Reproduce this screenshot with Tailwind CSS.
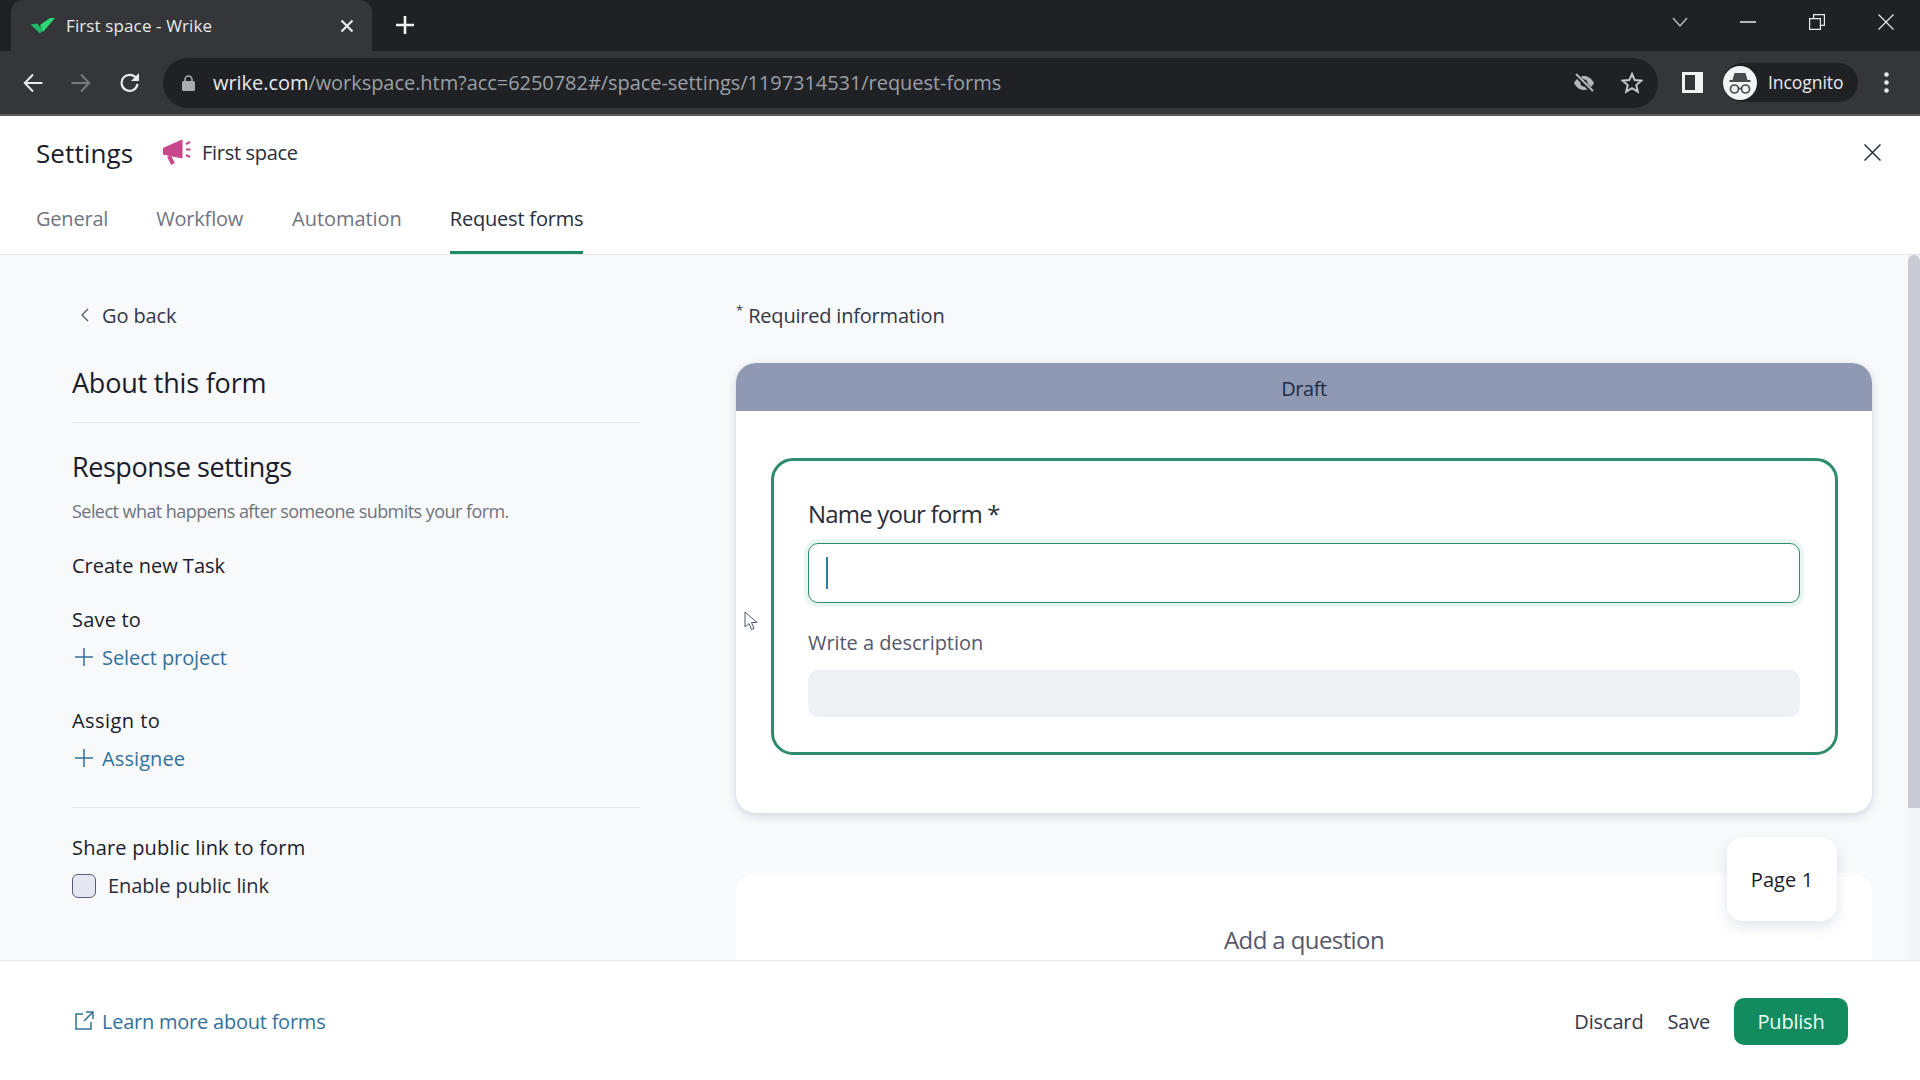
<!DOCTYPE html>
<html lang="en">
<head>
    <meta charset="UTF-8">
    <title>First space - Wrike</title>
    <script src="https://cdn.jsdelivr.net/npm/@tailwindcss/browser@4"></script>
</head>
<body class="bg-white font-['Open_Sans','Noto_Sans',sans-serif] overflow-hidden">
<div class="relative flex flex-col w-[1920px] h-[1080px] overflow-hidden">

    <!-- tab strip -->
    <div class="flex h-[51px] shrink-0 bg-[#202124]">
        <div class="flex items-center ml-[11px] w-[361px] h-[51px] bg-[#35363a] rounded-t-[12px] pl-[19px] pr-[18px]">
            <svg class="w-[25px] h-[16px] shrink-0" viewBox="0 0 25 16"><path d="M.5 6.500L7 5.500 13 12l-3 3.500z" fill="#1fb866"/><path d="M10 7L20 0h5L13 14z" fill="#2bd873"/></svg>
            <span class="ml-[11px] text-[17px] tracking-[0.12px] text-[#e8eaed]">First space - Wrike</span>
            <svg class="ml-auto w-[14px] h-[14px]" viewBox="0 0 14 14"><path d="M1.500 1.500l11 11M12.500 1.500l-11 11" stroke="#e8eaed" stroke-width="2.200"/></svg>
        </div>
        <svg class="ml-[24px] mt-[16px] w-[18px] h-[18px]" viewBox="0 0 18 18"><path d="M9 0v18M0 9h18" stroke="#f1f3f4" stroke-width="2.600"/></svg>
        <div class="ml-auto flex items-center h-[44px] pr-[26px]">
            <svg class="w-[16px] h-[10px]" viewBox="0 0 16 10"><path d="M1 1l7 8 7-8" fill="none" stroke="#bdc1c6" stroke-width="1.200"/></svg>
            <svg class="ml-[52px] w-[16px] h-[2px]" viewBox="0 0 16 2"><path d="M0 1h16" stroke="#e8eaed" stroke-width="1.500"/></svg>
            <svg class="ml-[53px] w-[16px] h-[16px]" viewBox="0 0 16 16"><path d="M.6 4.600h10.800v10.800H.6zM4.600 4V.6h10.800v10.800H12" fill="none" stroke="#e8eaed" stroke-width="1.200"/></svg>
            <svg class="ml-[53px] w-[16px] h-[16px]" viewBox="0 0 16 16"><path d="M.5.5l15 15M15.500.5l-15 15" stroke="#e8eaed" stroke-width="1.200"/></svg>
        </div>
    </div>

    <!-- toolbar -->
    <div class="flex items-center h-[65px] shrink-0 bg-[#35363a] border-b-2 border-[#5a5b5e]">
        <svg class="ml-[23px] w-[20px] h-[20px]" viewBox="0 0 20 20"><path d="M19.500 10H2M10 1.500L1.800 10l8.200 8.500" fill="none" stroke="#e8eaed" stroke-width="2"/></svg>
        <svg class="ml-[28px] w-[20px] h-[20px]" viewBox="0 0 20 20"><path d="M.5 10H18M10 1.500l8.200 8.500-8.200 8.500" fill="none" stroke="#77797c" stroke-width="2"/></svg>
        <svg class="ml-[28px] w-[21px] h-[21px]" viewBox="0 0 21 21"><path d="M17.600 7A8 8 0 1 0 18.500 12" fill="none" stroke="#e8eaed" stroke-width="2.200"/><path d="M20 1v8h-8z" fill="#e8eaed"/></svg>
        <div class="ml-[23px] flex items-center w-[1495px] h-[50px] rounded-full bg-[#202124]">
            <svg class="ml-[19px] w-[13px] h-[16px]" viewBox="0 0 13 16"><path d="M3 7V4.500a3.500 3.500 0 0 1 7 0V7" fill="none" stroke="#a9abae" stroke-width="1.600"/><rect y="6" width="13" height="10" rx="1.500" fill="#a9abae"/></svg>
            <span class="ml-[18px] text-[20px] tracking-[-0.05px] text-[#e8eaed]">wrike.com<span class="text-[#9aa0a6]">/workspace.htm?acc=6250782#/space-settings/1197314531/request-forms</span></span>
            <svg class="ml-auto w-[22px] h-[22px]" viewBox="0 0 22 22"><path d="M1 11c3-5 6-7 10-7s7 2 10 7c-3 5-6 7-10 7s-7-2-10-7z" fill="#b4b6b9"/><circle cx="11" cy="11" r="3.500" fill="#202124"/><path d="M2.500 2.500l17 17" stroke="#202124" stroke-width="4.500"/><path d="M3 2l17 17" stroke="#b4b6b9" stroke-width="2"/></svg>
            <svg class="ml-[26px] mr-[15px] w-[22px] h-[22px]" viewBox="0 0 22 22"><path d="M11 2l2.700 6.100 6.600.6-5 4.400 1.500 6.500L11 16.200l-5.800 3.400 1.500-6.500-5-4.400 6.600-.6z" fill="none" stroke="#c4c6c9" stroke-width="2"/></svg>
        </div>
        <svg class="ml-[24px] w-[21px] h-[21px]" viewBox="0 0 21 21"><path d="M0 0h21v21H0z" fill="#f1f3f4"/><path d="M3 3h10v15H3z" fill="#35363a"/></svg>
        <div class="ml-[20px] flex items-center w-[135px] h-[39px] rounded-full bg-[#202124]">
            <svg class="w-[34px] h-[34px] shrink-0" viewBox="0 0 34 34"><circle cx="17" cy="17" r="17" fill="#f1f3f4"/><path d="M11.500 7h11l2 7h-15z" fill="#4a4b4e"/><path d="M6.500 15h21" stroke="#4a4b4e" stroke-width="2"/><circle cx="11.500" cy="23" r="4" fill="none" stroke="#4a4b4e" stroke-width="1.700"/><circle cx="22.500" cy="23" r="4" fill="none" stroke="#4a4b4e" stroke-width="1.700"/><path d="M15.500 22.500h3" stroke="#4a4b4e" stroke-width="1.700"/></svg>
            <span class="ml-[11px] text-[17.5px] tracking-[-0.05px] text-[#e8eaed]">Incognito</span>
        </div>
        <svg class="ml-[26px] w-[5px] h-[21px]" viewBox="0 0 5 21"><circle cx="2.500" cy="2.500" r="2.300" fill="#e8eaed"/><circle cx="2.500" cy="10.500" r="2.300" fill="#e8eaed"/><circle cx="2.500" cy="18.500" r="2.300" fill="#e8eaed"/></svg>
    </div>

    <!-- settings header -->
    <div class="flex flex-col h-[139px] shrink-0 border-b border-[#e4e6ea] px-[36px]">
        <div class="flex items-center h-[74px]">
            <span class="w-[99px] text-[26px] font-medium text-[#1a1c2b] tracking-[0.1px]">Settings</span>
            <svg class="ml-[28px] w-[28px] h-[28px]" viewBox="0 0 28 28"><path d="M0 9.500L19 1v18L0 15z" fill="#c9468a" stroke="#c9468a" stroke-width="1" stroke-linejoin="round"/><path d="M6 17l4 8" stroke="#c9468a" stroke-width="4"/><path d="M23 5l4-2M23 10.500h4.500M23 16l4 2" stroke="#c9468a" stroke-width="2"/></svg>
            <span class="ml-[11px] text-[20px] text-[#2a2d3a] tracking-[-0.3px]">First space</span>
            <svg class="ml-auto mr-[3px] mb-[2px] w-[17px] h-[17px]" viewBox="0 0 17 17"><path d="M.5.5l16 16M16.500.5l-16 16" stroke="#2a2d3a" stroke-width="1.500"/></svg>
        </div>
        <div class="flex gap-[48px] mt-auto text-[20px] tracking-[-0.2px] text-[#6f7480]">
            <span class="h-[60px] pt-[10px]">General</span>
            <span class="h-[60px] pt-[10px]">Workflow</span>
            <span class="h-[60px] pt-[10px] ml-[1px] tracking-[-0.05px]">Automation</span>
            <span class="h-[60px] pt-[10px] text-[#2a2d3a] border-b-[3px] border-[#1f8a66]">Request forms</span>
        </div>
    </div>

    <!-- body -->
    <div class="relative flex flex-1 min-h-0 bg-[#f8f9fb]">
        <!-- left panel -->
        <div class="w-[568px] ml-[72px] shrink-0">
            <div class="flex items-center h-[34px] mt-[44px]">
                <svg class="ml-[8px] mb-[2px] w-[10px] h-[14px]" viewBox="0 0 10 14"><path d="M8 1L2 7l6 6" fill="none" stroke="#55586a" stroke-width="1.300"/></svg>
                <span class="ml-[12px] text-[20px] tracking-[-0.1px] text-[#33374a]">Go back</span>
            </div>
            <div class="mt-[28px] h-[44px] flex items-center text-[27px] font-medium tracking-[-0.2px] text-[#1a1c2b]">About this form</div>
            <div class="mt-[17px] border-t border-[#e4e6ea]"></div>
            <div class="mt-[22px] h-[44px] flex items-center text-[27px] font-medium tracking-[-0.45px] text-[#1a1c2b]">Response settings</div>
            <div class="mt-[10px] h-[24px] flex items-center text-[18px] tracking-[-0.55px] text-[#6f7480]">Select what happens after someone submits your form.</div>
            <div class="mt-[28px] h-[30px] flex items-center text-[20px] font-medium text-[#1a1c2b]">Create new Task</div>
            <div class="mt-[24px] h-[30px] flex items-center text-[20px] font-medium tracking-[0.2px] text-[#1a1c2b]">Save to</div>
            <div class="mt-[8px] h-[30px] flex items-center">
                <svg class="ml-[3px] mb-[2px] w-[18px] h-[18px]" viewBox="0 0 18 18"><path d="M9 0v18M0 9h18" stroke="#33719b" stroke-width="1.500"/></svg>
                <span class="ml-[9px] text-[20px] tracking-[-0.07px] text-[#33719b]">Select project</span>
            </div>
            <div class="mt-[33px] h-[30px] flex items-center text-[20px] font-medium tracking-[0.45px] text-[#1a1c2b]">Assign to</div>
            <div class="mt-[8px] h-[30px] flex items-center">
                <svg class="ml-[3px] mb-[2px] w-[18px] h-[18px]" viewBox="0 0 18 18"><path d="M9 0v18M0 9h18" stroke="#33719b" stroke-width="1.500"/></svg>
                <span class="ml-[9px] text-[20px] tracking-[0.1px] text-[#33719b]">Assignee</span>
            </div>
            <div class="mt-[33px] border-t border-[#e4e6ea]"></div>
            <div class="mt-[25px] h-[30px] flex items-center text-[20px] font-medium tracking-[0.2px] text-[#1a1c2b]">Share public link to form</div>
            <div class="mt-[8px] h-[30px] flex items-center">
                <div class="w-[24px] h-[24px] rounded-[6px] border-[1.5px] border-[#5a5e72] bg-[#e5e8f3]"></div>
                <span class="ml-[12px] text-[20px] tracking-[-0.1px] text-[#2a2d3a]">Enable public link</span>
            </div>
        </div>

        <!-- form column -->
        <div class="w-[1136px] ml-[96px] shrink-0">
            <div class="h-[34px] mt-[44px] flex items-center">
                <span class="text-[13px] self-start mt-[2px] text-[#33374a]">*</span>
                <span class="ml-[5px] text-[20px] tracking-[-0.2px] text-[#33374a]">Required information</span>
            </div>
            <div class="mt-[30px] h-[450px] bg-white rounded-[20px] shadow-[0_3px_8px_rgba(120,130,160,0.3)]">
                <div class="flex items-center justify-center h-[48px] pt-[3px] rounded-t-[20px] bg-[#8f99b3] text-[20px] tracking-[-0.4px] text-[#1f2a44]">Draft</div>
                <div class="ml-[35px] mt-[47px] w-[1067px] h-[297px] rounded-[22px] border-[3px] border-[#2e8b6c] px-[34px] pt-[35px]">
                    <div class="h-[36px] flex items-center text-[24px] tracking-[-0.8px] text-[#2a2d3a]">Name your form *</div>
                    <div class="mt-[11px] h-[60px] w-[992px] rounded-[10px] border-[1.5px] border-[#2e8b6c] shadow-[0_0_0_4px_#e8f6f0] bg-white flex items-center">
                        <div class="ml-[17px] w-[2px] h-[32px] bg-[#2f7f9b]"></div>
                    </div>
                    <div class="mt-[25px] h-[30px] flex items-center text-[20px] tracking-[-0.05px] text-[#55586a]">Write a description</div>
                    <div class="mt-[12px] h-[47px] w-[992px] rounded-[10px] bg-[#f0f1f5]"></div>
                </div>
            </div>
            <div class="mt-[60px] h-[120px] bg-white rounded-t-[20px] flex justify-center pt-[49px]">
                <span class="h-[36px] flex items-center text-[24px] tracking-[-0.6px] text-[#55586a]">Add a question</span>
            </div>
        </div>

        <!-- scrollbar -->
        <div class="ml-auto w-[12px] h-full bg-[#f3f4f6]">
            <div class="h-[553px] rounded-t-[6px] bg-[#c8ccd2]"></div>
        </div>

        <!-- page chip -->
        <div class="absolute left-[1727px] top-[582px] w-[110px] h-[84px] pt-[2px] flex items-center justify-center rounded-[16px] bg-white shadow-[0_6px_14px_rgba(120,130,160,0.2)] text-[20px] font-medium tracking-[0.1px] text-[#1a1c2b]">Page 1</div>
        <!-- mouse pointer -->
        <svg class="absolute left-[744px] top-[356px] w-[14px] h-[20px]" viewBox="0 0 14 20"><path d="M1 1v15l4-3.500 2.500 6 2.500-1-2.500-6H13z" fill="#fff" stroke="#55586a" stroke-width="1"/></svg>
    </div>

    <!-- footer -->
    <div class="relative flex items-center h-[120px] shrink-0 bg-white border-t border-[#e8eaee] pl-[75px] pr-[72px]">
        <svg class="w-[19px] h-[19px]" viewBox="0 0 19 19"><path d="M8 3H1v15h15v-7M11 1h7v7M18 1l-9 9" fill="none" stroke="#33719b" stroke-width="1.500"/></svg>
        <span class="ml-[8px] pt-[3px] text-[20px] tracking-[-0.23px] text-[#33719b]">Learn more about forms</span>
        <span class="ml-auto pt-[3px] text-[20px] tracking-[-0.15px] text-[#33374a]">Discard</span>
        <span class="ml-[24px] pt-[3px] text-[20px] tracking-[-0.2px] text-[#33374a]">Save</span>
        <button class="ml-[24px] mt-[1px] pt-[2px] w-[114px] h-[47px] rounded-[10px] bg-[#128c5e] text-[20px] tracking-[-0.2px] text-[#e8fff4]">Publish</button>
    </div>
</div>
</body>
</html>
